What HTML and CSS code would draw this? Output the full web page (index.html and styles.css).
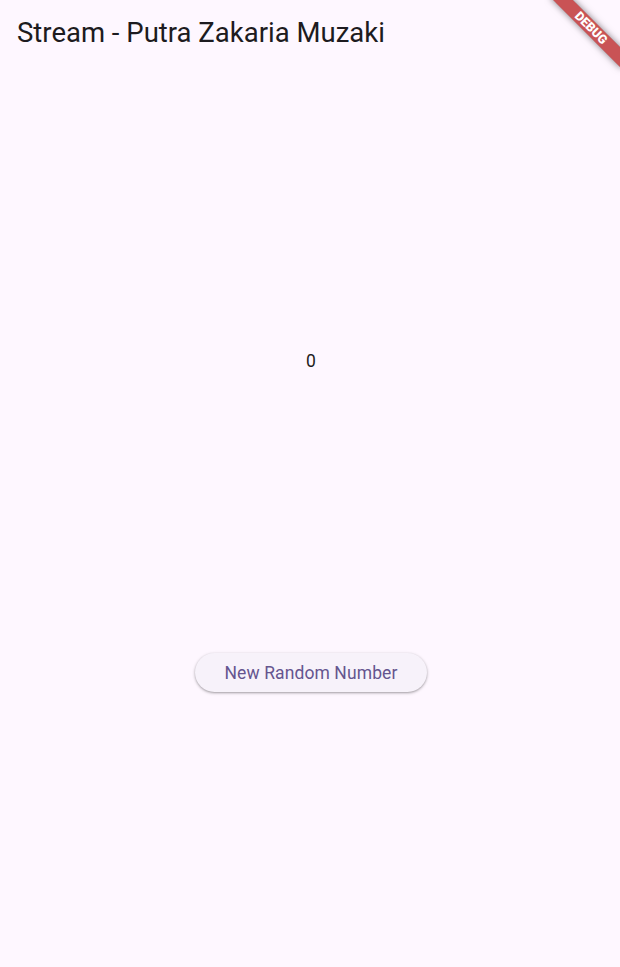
FILE: index.html
```html
<!DOCTYPE html>
<html>
<head>
<meta charset="utf-8">
<link rel="stylesheet" href="styles.css">
</head>
<body>
<div class="app">
  <header class="appbar">
    <h1 class="title">Stream - Putra Zakaria Muzaki</h1>
  </header>
  <main class="body">
    <div class="number">0</div>
    <button class="btn">New Random Number</button>
  </main>
  <div class="banner"><span>DEBUG</span></div>
</div>
</body>
</html>
```
FILE: styles.css
```css
html, body {
  margin: 0;
  padding: 0;
  background: #FEF7FF;
}
.app {
  width: 620px;
  height: 967px;
  position: relative;
  overflow: hidden;
  display: flex;
  flex-direction: column;
  font-family: Roboto, "Noto Sans", sans-serif;
}
.appbar {
  height: 64px;
  display: flex;
  align-items: center;
  padding-left: 17px;
  flex: none;
}
.title {
  margin: 0;
  font-size: 27.5px;
  font-weight: 400;
  line-height: 35px;
  color: #1D1B20;
}
.body {
  flex: 1;
  display: flex;
  flex-direction: column;
  align-items: center;
  padding-left: 2px;
}
.number {
  margin-top: 285px;
  font-size: 17.5px;
  line-height: 24px;
  color: #1D1B20;
  letter-spacing: 0.3px;
}
.btn {
  margin-top: 280px;
  height: 39px;
  padding: 0 30px;
  border: none;
  border-radius: 20px;
  background: #F7F2FA;
  color: #65558F;
  font-family: Roboto, "Noto Sans", sans-serif;
  font-size: 17.5px;
  font-weight: 400;
  letter-spacing: 0.1px;
  box-shadow: 0 1px 2px rgba(0,0,0,0.25), 0 1px 3px 1px rgba(0,0,0,0.1);
}
.banner {
  position: absolute;
  left: 541px;
  top: 21px;
  width: 100px;
  height: 14px;
  transform: rotate(45deg);
  background: rgba(183, 28, 28, 0.75);
  box-shadow: 0 0 7px rgba(0,0,0,0.5);
  display: flex;
  align-items: center;
  justify-content: center;
}
.banner span {
  color: #fff;
  font-size: 12.5px;
  font-weight: 900;
  line-height: 1;
  font-family: Roboto, sans-serif;
}
```
